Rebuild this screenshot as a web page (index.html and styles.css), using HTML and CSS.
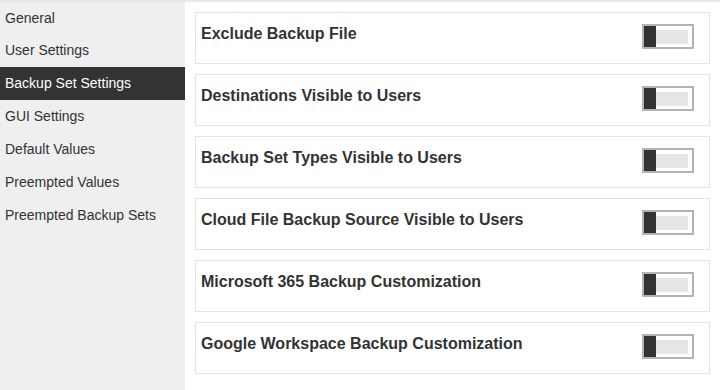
FILE: index.html
```html
<!DOCTYPE html>
<html>
<head>
<meta charset="utf-8">
<link rel="stylesheet" href="styles.css">
</head>
<body>
<div class="app">
  <nav class="sidebar">
    <div class="nav-item">General</div>
    <div class="nav-item">User Settings</div>
    <div class="nav-item active">Backup Set Settings</div>
    <div class="nav-item">GUI Settings</div>
    <div class="nav-item">Default Values</div>
    <div class="nav-item">Preempted Values</div>
    <div class="nav-item">Preempted Backup Sets</div>
  </nav>
  <main class="content">
    <div class="card"><div class="title">Exclude Backup File</div><div class="toggle"><span class="knob"></span><span class="track"></span></div></div>
    <div class="card"><div class="title">Destinations Visible to Users</div><div class="toggle"><span class="knob"></span><span class="track"></span></div></div>
    <div class="card"><div class="title">Backup Set Types Visible to Users</div><div class="toggle"><span class="knob"></span><span class="track"></span></div></div>
    <div class="card"><div class="title">Cloud File Backup Source Visible to Users</div><div class="toggle"><span class="knob"></span><span class="track"></span></div></div>
    <div class="card"><div class="title">Microsoft 365 Backup Customization</div><div class="toggle"><span class="knob"></span><span class="track"></span></div></div>
    <div class="card"><div class="title">Google Workspace Backup Customization</div><div class="toggle"><span class="knob"></span><span class="track"></span></div></div>
  </main>
</div>
</body>
</html>
```
FILE: styles.css
```css
html, body {
  margin: 0;
  padding: 0;
  height: 100%;
  background: #fff;
  font-family: "Liberation Sans", Arial, sans-serif;
  color: #333;
}
.app {
  display: flex;
  height: 390px;
  border-top: 2px solid #e8e8e8;
  box-sizing: border-box;
}
.sidebar {
  width: 185px;
  flex: none;
  background: #efefef;
  padding-top: 0;
}
.nav-item {
  height: 33px;
  line-height: 33px;
  padding-left: 5px;
  font-size: 14px;
  color: #333;
  white-space: nowrap;
}
.nav-item:first-child {
  height: 32px;
  line-height: 32px;
}
.nav-item.active {
  background: #333;
  color: #fff;
}
.content {
  flex: 1;
  padding: 10px 10px 0 10px;
  display: flex;
  flex-direction: column;
  gap: 10px;
}
.card {
  height: 52px;
  box-sizing: border-box;
  border: 1px solid #e3e3e3;
  padding: 10px 15px 0 5px;
  display: flex;
  justify-content: space-between;
  align-items: flex-start;
}
.title {
  font-size: 16px;
  font-weight: bold;
  line-height: 20px;
  margin-top: 1px;
  color: #333;
}
.toggle {
  width: 52px;
  height: 25px;
  box-sizing: border-box;
  border: 2px solid #b3b3b3;
  background: #fff;
  display: flex;
  align-items: center;
  margin-top: 1px;
}
.knob {
  width: 12px;
  height: 21px;
  background: #333;
  flex: none;
}
.track {
  width: 32px;
  height: 14px;
  background: #e5e5e5;
  flex: none;
}
```
